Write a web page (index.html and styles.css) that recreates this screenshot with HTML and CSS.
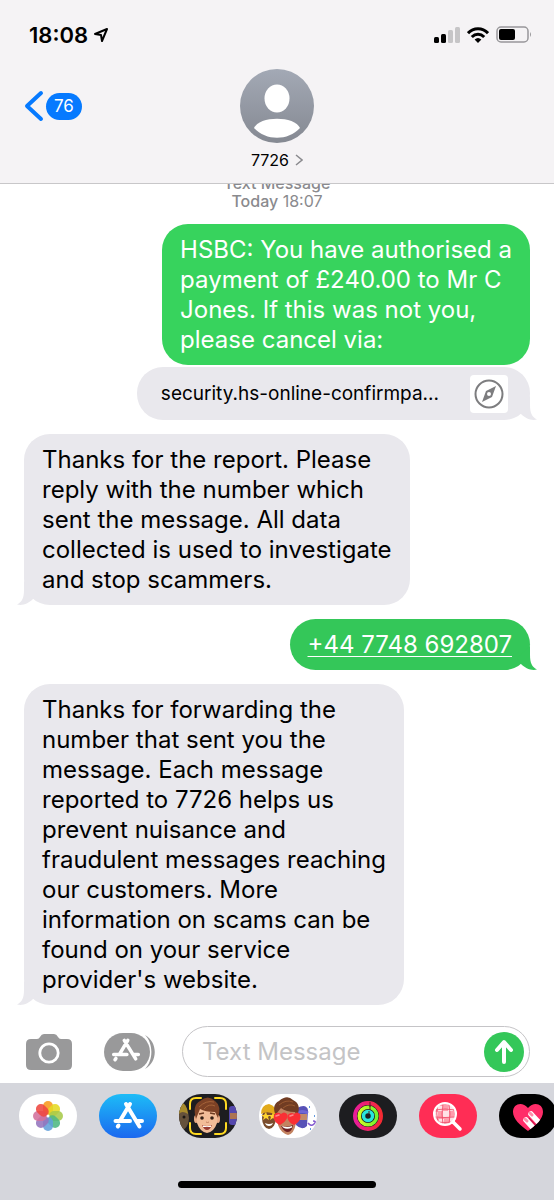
FILE: index.html
```
<!DOCTYPE html>
<html lang="en">
<head>
  <meta charset="UTF-8">
  <meta name="viewport" content="width=device-width, initial-scale=1.0">
  <title>Messages - 7726</title>
  <link rel="stylesheet" href="styles.css">
</head>
<body>
  <header class="header">
    <div class="status-bar">
      <span class="time">18:08</span>
      <svg class="location" width="16" height="16" viewBox="0 0 16 16" fill="none" stroke="#000" stroke-width="2" stroke-linejoin="round"><path d="M14 2 9 14 8 8 2 7Z"/></svg>
      <div class="indicators">
        <svg width="26" height="16" viewBox="0 0 26 16"><rect y="10" width="5" height="6" rx="1.5"/><rect x="7" y="7" width="5" height="9" rx="1.5"/><rect x="14" y="3" width="5" height="13" rx="1.5" fill="#c6c5c7"/><rect x="21" width="5" height="16" rx="1.5" fill="#c6c5c7"/></svg>
        <svg width="22" height="16" viewBox="0 0 22 16" fill="none" stroke="#000" stroke-width="3"><path d="M1 6.2C6.5.4 15.5.4 21 6.2M4.8 10C8.5 6.2 13.5 6.2 17.2 10"/><path d="M11 16 7.6 12.6Q11 9.6 14.4 12.6Z" fill="#000" stroke="none"/></svg>
        <svg width="36" height="17" viewBox="0 0 36 17"><rect x="1" y="1" width="31" height="15" rx="4" fill="none" stroke="#98979a" stroke-width="1.5"/><rect x="3" y="3" width="16" height="11" rx="2"/><path d="M34 6q2 2.5 0 5Z" fill="#98979a"/></svg>
      </div>
    </div>
    <nav class="nav">
      <button class="back" aria-label="Back, 76 unread">
        <svg width="20" height="32" viewBox="0 0 20 32" fill="none" stroke="#067aff" stroke-width="4" stroke-linecap="round" stroke-linejoin="round"><path d="M17 3 3 16 17 29"/></svg>
        <span class="badge">76</span>
      </button>
      <button class="contact">
        <svg width="74" height="74" viewBox="0 0 74 74">
          <defs><linearGradient id="avatar" x2="0" y2="1"><stop stop-color="#a3a9b5"/><stop offset="1" stop-color="#858992"/></linearGradient></defs>
          <circle cx="37" cy="37" r="37" fill="url(#avatar)"/>
          <ellipse cx="37" cy="29.5" rx="12.5" ry="14" fill="#fff"/>
          <path d="M14 59C19 46.5 55 46.5 60 59C48 72 26 72 14 59Z" fill="#fff"/>
        </svg>
        <span class="name">7726 <svg width="8" height="12" viewBox="0 0 8 12" fill="none" stroke="#8a8a8e" stroke-width="1.5"><path d="m1 1 6 5-6 5"/></svg></span>
      </button>
    </nav>
  </header>

  <main class="thread">
    <p class="stamp"><strong>Text Message</strong><br><strong>Today</strong> 18:07</p>
    <div class="bubble sent light">HSBC: You have authorised a<br>payment of £240.00 to Mr C<br>Jones. If this was not you,<br>please cancel via:</div>
    <a class="bubble link-card" href="#">
      <span class="link-text">security.hs-online-confirmpa...</span>
      <span class="compass"><svg width="30" height="30" viewBox="0 0 30 30"><circle cx="15" cy="15" r="13.5" fill="none" stroke="#7d7d7f" stroke-width="2"/><path fill-rule="evenodd" d="M22 7 18 18 8 23 12 12ZM15 13a2 2 0 1 0 0 4 2 2 0 0 0 0-4Z" fill="#7d7d7f"/></svg></span>
      <svg class="tail" width="24" height="24" viewBox="0 0 24 24" fill="#e9e8ed"><path d="M17 0V9C17 17 19 21 24 23.5C18 25 12 22 8 18L4 12Z"/></svg>
    </a>
    <div class="bubble received">Thanks for the report. Please<br>reply with the number which<br>sent the message. All data<br>collected is used to investigate<br>and stop scammers.
      <svg class="tail" width="24" height="24" viewBox="0 0 24 24" fill="#e9e8ed"><path d="M17 0V9C17 17 19 21 24 23.5C18 25 12 22 8 18L4 12Z"/></svg>
    </div>
    <div class="bubble sent"><a href="tel:+447748692807">+44 7748 692807</a>
      <svg class="tail" width="24" height="24" viewBox="0 0 24 24" fill="#34c759"><path d="M17 0V9C17 17 19 21 24 23.5C18 25 12 22 8 18L4 12Z"/></svg>
    </div>
    <div class="bubble received">Thanks for forwarding the<br>number that sent you the<br>message. Each message<br>reported to 7726 helps us<br>prevent nuisance and<br>fraudulent messages reaching<br>our customers. More<br>information on scams can be<br>found on your service<br>provider's website.
      <svg class="tail" width="24" height="24" viewBox="0 0 24 24" fill="#e9e8ed"><path d="M17 0V9C17 17 19 21 24 23.5C18 25 12 22 8 18L4 12Z"/></svg>
    </div>
  </main>

  <form class="composer">
    <button class="tool" type="button" aria-label="Camera">
      <svg width="46" height="36" viewBox="0 0 46 36"><path d="M5 5H11Q13 5 14 3Q15.5 0 18 0H28Q30.5 0 32 3Q33 5 35 5H41Q46 5 46 10V31Q46 36 41 36H5Q0 36 0 31V10Q0 5 5 5Z" fill="#99999a"/><circle cx="23" cy="19" r="9.2" fill="none" stroke="#fff" stroke-width="2.8"/></svg>
    </button>
    <button class="tool" type="button" aria-label="Apps">
      <svg width="52" height="38" viewBox="0 0 52 38"><rect width="46" height="38" rx="19" fill="#99999a"/><path d="M41 2C54 9 54 29 41 36C49 28 50 11 41 2Z" fill="#99999a"/><g transform="translate(-3.5 -2.3) scale(.88)" fill="none" stroke="#fff" stroke-width="4" stroke-linecap="round"><path d="M31 11 21.5 27M27 11 40 32M15 27H30M37 27H43M17.5 31.5 16.5 33"/></g></svg>
    </button>
    <div class="field">
      <input type="text" placeholder="Text Message" aria-label="Text Message">
      <button class="send" type="submit" aria-label="Send">
        <svg width="22" height="26" viewBox="0 0 22 26" fill="none" stroke="#fff" stroke-width="4" stroke-linecap="round" stroke-linejoin="round"><path d="M11 23V4M4 11 11 3 18 11"/></svg>
      </button>
    </div>
  </form>

  <footer class="app-strip">
    <div class="apps">
      <button class="app photos" aria-label="Photos">
        <svg viewBox="0 0 58 44" fill-opacity=".88">
          <g transform="translate(29 22)">
            <rect x="-5" y="-15" width="10" height="14" rx="5" fill="#f8981d"/>
            <rect x="-5" y="-15" width="10" height="14" rx="5" fill="#e5da22" transform="rotate(45)"/>
            <rect x="-5" y="-15" width="10" height="14" rx="5" fill="#a7c94a" transform="rotate(90)"/>
            <rect x="-5" y="-15" width="10" height="14" rx="5" fill="#4eb782" transform="rotate(135)"/>
            <rect x="-5" y="-15" width="10" height="14" rx="5" fill="#629fdb" transform="rotate(180)"/>
            <rect x="-5" y="-15" width="10" height="14" rx="5" fill="#9474bd" transform="rotate(225)"/>
            <rect x="-5" y="-15" width="10" height="14" rx="5" fill="#d3719c" transform="rotate(270)"/>
            <rect x="-5" y="-15" width="10" height="14" rx="5" fill="#ee4740" transform="rotate(315)"/>
            <circle r="1.5" fill="#fff"/>
          </g>
        </svg>
      </button>
      <button class="app store" aria-label="App Store">
        <svg viewBox="0 0 58 44" fill="none" stroke="#fff" stroke-width="4" stroke-linecap="round"><path d="M31 10 21.5 26M27 10 40.5 32.5M16.5 27H31M38 27H43M19.5 31.5 18.8 32.5"/></svg>
      </button>
      <button class="app memoji" aria-label="Memoji">
        <svg viewBox="0 0 58 44">
          <ellipse cx="2" cy="24" rx="8" ry="12" fill="#65513b"/><path d="M0 8Q8 8 9 20Q3 16 0 20Z" fill="#a88b2d"/><circle cx="5" cy="23" r="1.5" fill="#1b1714"/>
          <rect x="50" y="12" width="8" height="19" rx="3" fill="#5548ad"/><path d="M51 19h7v6h-7Z" fill="#ad7452"/>
          <ellipse cx="17" cy="25" rx="2" ry="4" fill="#e9ab86"/><ellipse cx="39" cy="25" rx="2" ry="4" fill="#e9ab86"/>
          <path d="M17 15Q28 9 39 15L38 29Q35 38 28 39Q21 38 18 29Z" fill="#f2bd98"/>
          <path d="M17 25Q13 11 21 7Q29 0 36 7Q43 12 39 24L36 18Q26 18 21 15Q19 20 17 25Z" fill="#7c4125"/>
          <path d="M20 13Q27 6 35 8M25 15Q30 9 36 12" fill="none" stroke="#a5643a"/>
          <circle cx="23" cy="24" r="1.8" fill="#332016"/><circle cx="33" cy="24" r="1.8" fill="#332016"/>
          <path d="M20 20l5-1M31 19l5 1" stroke="#6d3b22" stroke-width="1.3"/><path d="M27 28q1.5 1 3 0" fill="none" stroke="#c38062"/>
          <path d="M23 31Q28 33 33 31Q31 36 28 36Q25 36 23 31Z" fill="#993d35"/><path d="M24 31.5Q28 33 32 31.5V33H24Z" fill="#fff"/>
          <path d="M11 15V10Q11 4 17 4H22M36 4H41Q47 4 47 10V15M47 29V34Q47 40 41 40H36M22 40H17Q11 40 11 34V29" fill="none" stroke="#ffda22" stroke-width="2" stroke-linecap="round"/>
        </svg>
      </button>
      <button class="app stickers" aria-label="Memoji stickers">
        <svg viewBox="0 0 58 44">
          <ellipse cx="10" cy="24" rx="7" ry="11" fill="#7b4d2d"/><path d="M2 20Q2 11 10 10Q18 12 17 21Q9 16 2 20Z" fill="#e2aa1b"/>
          <path d="m7 18 1 3 3 0-2 2 1 3-3-2-3 2 1-3-3-2h3ZM14 18l1 3h3l-2 2 1 3-3-2-3 2 1-3-2-2h3Z" fill="#ffd52e"/><path d="M6 29q4 2 8 0-1 3-4 3-3 0-4-3Z" fill="#fff"/>
          <path d="M38 14Q47 9 49 16L48 32Q43 37 37 31Z" fill="#5751b7"/><path d="M39 20h9v6h-9Z" fill="#c48a68"/><path d="M38 19q5-3 11 0" stroke="#7067d5" stroke-width="3" fill="none"/><path d="M49 29q3 4 6 1t-1-3" stroke="#8258ce" stroke-width="1.5" fill="none"/>
          <path d="M50 13h1M55 22h1M51 35h1" stroke="#317ad3" stroke-width="1.5"/>
          <path d="M18 16Q28 8 38 16L37 29Q35 40 29 41Q22 39 19 31Z" fill="#c38260"/>
          <path d="M17 22Q12 11 20 7Q28 0 34 6Q43 10 38 22L36 18Q27 18 22 14Q18 18 17 22Z" fill="#713c23"/><path d="M20 11Q27 5 34 8M24 14Q30 9 36 12" fill="none" stroke="#9b5a32"/>
          <path d="M22 32Q28 34 34 31Q33 38 29 38Q25 38 22 32Z" fill="#6d2023"/><path d="M23 32Q28 34 33 32V33.5Q28 36 24 33.500Z" fill="#fff"/>
          <path d="M21 31C14 28 13 21 17 19Q20 18 22 20Q25 17 28 20C30 24 25 29 21 31Z" fill="#f92f35"/>
          <path d="M35 31C28 28 27 21 30 20Q33 18 35 20Q38 17 41 20C43 25 39 29 35 31Z" fill="#f92f35"/>
          <path d="M17 22l3-1M31 22l3-1" stroke="#ff898b" stroke-width="1.5" stroke-linecap="round"/>
        </svg>
      </button>
      <button class="app activity" aria-label="Activity">
        <svg viewBox="0 0 58 44" fill="none">
          <defs><linearGradient id="move"><stop stop-color="#e91c9a"/><stop offset="1" stop-color="#f52a32"/></linearGradient><linearGradient id="exercise"><stop stop-color="#d4fb25"/><stop offset="1" stop-color="#71f32f"/></linearGradient></defs>
          <circle cx="29" cy="22" r="13" stroke="url(#move)" stroke-width="4"/><circle cx="29" cy="22" r="8.8" stroke="url(#exercise)" stroke-width="3.5"/><circle cx="29" cy="22" r="4.5" stroke="#28e5dc" stroke-width="3.5"/>
          <path d="M31 8v5M31 12v4M30 17v3" stroke="#58201e"/>
        </svg>
      </button>
      <button class="app images" aria-label="Images search">
        <svg viewBox="0 0 58 44" fill="none">
          <circle cx="26" cy="20" r="11" fill="#ff9cac"/>
          <path d="M19 12h5v5h-5ZM30 11h4v6h-5ZM24 17h6v6h-6ZM15 18h4v6h-4ZM31 23h5v5h-5ZM20 25h5v5h-5Z" fill="#ffe1e6"/>
          <path d="M24 9Q22 20 24 31M30 9Q32 20 30 31M18 11Q17 20 19 29M15 16Q26 14 37 16M15 23Q26 24 37 23M18 28Q26 29 34 28" stroke="#ef4966" stroke-width=".8"/>
          <circle cx="26" cy="20" r="11" stroke="#fff" stroke-width="2"/><path d="M34 28 41 35" stroke="#fff" stroke-width="3.5" stroke-linecap="round"/>
        </svg>
      </button>
      <button class="app touch" aria-label="Digital Touch">
        <svg viewBox="0 0 58 44">
          <defs><clipPath id="heart"><path d="M29 37C21 31 14 25 14 18C14 10 23 7 29 14C35 7 44 10 44 18C44 25 37 31 29 37Z"/></clipPath></defs>
          <g clip-path="url(#heart)"><path d="M12 8h34v31H12Z" fill="#ff2d69"/><path d="M27 26 36 36M32 20 42 31" stroke="#fff" stroke-width="5.5" stroke-linecap="round"/><path d="M30 24 42 37" stroke="#b91745"/><path d="m26 25 2 2M31 19l2 2" stroke="#ff8eac" stroke-width="3" stroke-linecap="round"/></g>
        </svg>
      </button>
    </div>
    <div class="home-bar"></div>
  </footer>
</body>
</html>
```
FILE: styles.css
```
* {
  box-sizing: border-box;
}
body {
  display: flex;
  flex-direction: column;
  height: 100vh;
  margin: 0;
  overflow: hidden;
  font-family: Inter, "Liberation Sans", sans-serif;
  color: #000;
  background: #fff;
}
button {
  padding: 0;
  border: none;
  background: none;
  font: inherit;
  color: inherit;
  cursor: pointer;
}
svg {
  display: block;
  flex-shrink: 0;
}

/* header */
.header {
  flex-shrink: 0;
  background: #f5f3f5;
  border-bottom: 1px solid #c8c7c9;
}
.status-bar {
  display: flex;
  align-items: center;
  height: 69px;
  padding: 0 22px 0 29px;
}
.time {
  font-size: 22px;
  font-weight: 600;
}
.location {
  margin-left: 5px;
}
.indicators {
  display: flex;
  align-items: center;
  gap: 7px;
  margin-left: auto;
}
.nav {
  display: grid;
  grid-template-columns: 1fr auto 1fr;
  align-items: start;
  padding: 0 24px 13px;
}
.back {
  display: flex;
  align-items: center;
  justify-self: start;
  gap: 2px;
  height: 74px;
}
.badge {
  padding: 0 8px;
  border-radius: 14px;
  background: #067aff;
  color: #fff;
  font-size: 17px;
  line-height: 27px;
}
.contact {
  display: flex;
  flex-direction: column;
  align-items: center;
  gap: 7px;
}
.name {
  display: flex;
  align-items: center;
  gap: 6px;
  font-size: 16px;
  line-height: 20px;
}

/* conversation */
.thread {
  display: flex;
  flex: 1;
  flex-direction: column;
  align-items: flex-start;
  justify-content: flex-end;
  gap: 14px;
  min-height: 0;
  padding: 0 24px;
  overflow: hidden;
}
.stamp {
  align-self: center;
  margin: 0;
  color: #8a8a8e;
  font-size: 16px;
  line-height: 18px;
  text-align: center;
}
.stamp strong {
  font-weight: 500;
}
.bubble {
  position: relative;
  flex-shrink: 0;
  padding: 11px 18px 10px;
  border-radius: 26px;
  font-size: 24px;
  line-height: 30px;
}
.received {
  background: #e9e8ed;
}
.sent {
  align-self: flex-end;
  background: #34c759;
  color: #fff;
}
.sent.light {
  background: #37d35d;
}
.sent a {
  color: inherit;
  text-decoration-thickness: 1px;
  text-underline-offset: 3px;
}
.tail {
  position: absolute;
  right: -7px;
  bottom: 0;
}
.received .tail {
  right: auto;
  left: -7px;
  transform: scaleX(-1);
}
.link-card {
  display: flex;
  align-items: center;
  align-self: flex-end;
  gap: 31px;
  height: 53px;
  margin-top: -12px;
  padding: 0 22px 0 24px;
  background: #e9e8ed;
  color: #000;
  font-size: 19px;
  text-decoration: none;
}
.compass {
  padding: 4px;
  border-radius: 4px;
  background: #fff;
}

/* message box */
.composer {
  display: flex;
  flex-shrink: 0;
  align-items: center;
  gap: 32px;
  padding: 21px 24px 6px 26px;
}
.field {
  display: flex;
  flex: 1;
  align-items: center;
  min-width: 0;
  height: 51px;
  margin-left: -6px;
  padding: 0 5px 0 19px;
  border: 1px solid #c5c4c7;
  border-radius: 26px;
}
.field input {
  flex: 1;
  min-width: 0;
  padding: 0;
  border: none;
  outline: none;
  background: none;
  font: inherit;
  font-size: 24px;
}
.field input::placeholder {
  color: #c4c4c6;
}
.send {
  display: grid;
  place-items: center;
  width: 40px;
  height: 40px;
  border-radius: 50%;
  background: #34c759;
}

/* app drawer */
.app-strip {
  display: flex;
  flex-direction: column;
  flex-shrink: 0;
  align-items: center;
  gap: 43px;
  padding: 11px 0 12px;
  background: #d5d6dc;
}
.apps {
  display: flex;
  align-self: stretch;
  gap: 22px;
  padding-left: 19px;
  overflow: hidden;
}
.app {
  flex: none;
  width: 58px;
  height: 44px;
  border-radius: 22px;
  overflow: hidden;
}
.photos,
.stickers {
  background: #fff;
}
.store {
  background: linear-gradient(#1dbcf7, #1b68ef);
}
.memoji,
.activity {
  background: #1d1d20;
}
.images {
  background: #ff2d55;
}
.touch {
  background: #000;
}
.home-bar {
  width: 198px;
  height: 7px;
  border-radius: 4px;
  background: #000;
}
```
